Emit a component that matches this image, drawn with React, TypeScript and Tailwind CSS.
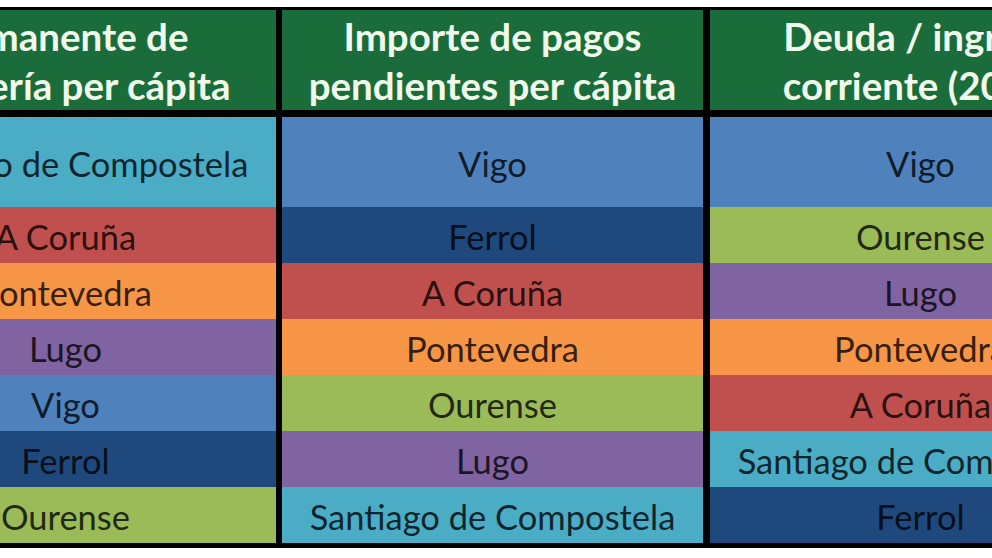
const colors: Record<string, string> = {
  "Santiago de Compostela": "bg-[#4bacc6]",
  Vigo: "bg-[#4f81bd]",
  Ferrol: "bg-[#1f497d]",
  "A Coruña": "bg-[#c0504d]",
  Pontevedra: "bg-[#f79646]",
  Lugo: "bg-[#8064a2]",
  Ourense: "bg-[#9bbb59]",
};

const columns = [
  {
    title: ["Remanente de", "tesorería per cápita"],
    cities: ["Santiago de Compostela", "A Coruña", "Pontevedra", "Lugo", "Vigo", "Ferrol", "Ourense"],
    gap: "",
  },
  {
    title: ["Importe de pagos", "pendientes per cápita"],
    cities: ["Vigo", "Ferrol", "A Coruña", "Pontevedra", "Ourense", "Lugo", "Santiago de Compostela"],
    gap: "ml-[6px]",
  },
  {
    title: ["Deuda / ingreso", "corriente (2013)"],
    cities: ["Vigo", "Ourense", "Lugo", "Pontevedra", "A Coruña", "Santiago de Compostela", "Ferrol"],
    gap: "ml-[7px]",
  },
];

export default function App() {
  return (
    <div
      className="w-[992px] h-[558px] bg-white overflow-hidden"
      style={{ fontFamily: "Lato, 'Noto Sans', sans-serif" }}
    >
      <div className="mt-[7px] ml-[-145px] w-max flex bg-black pt-[3px] pb-[5px]">
        {columns.map((col, i) => (
          <div key={i} className={`w-[421px] flex flex-col ${col.gap}`}>
            {/* cabecera */}
            <div className="h-[100px] bg-[#1a6d3a] flex flex-col items-center justify-center pt-[2px] text-[#f0f9ea] font-bold text-[38.5px] leading-[49px] whitespace-nowrap">
              <span>{col.title[0]}</span>
              <span>{col.title[1]}</span>
            </div>
            <div className="h-[7px]" />
            {col.cities.map((city, j) => (
              <div
                key={j}
                className={`${colors[city]} ${j === 0 ? "h-[90px]" : "h-[56px]"} flex items-center justify-center pt-[3px] text-black/80 text-[34.5px] whitespace-nowrap`}
              >
                {city}
              </div>
            ))}
          </div>
        ))}
      </div>
    </div>
  );
}
